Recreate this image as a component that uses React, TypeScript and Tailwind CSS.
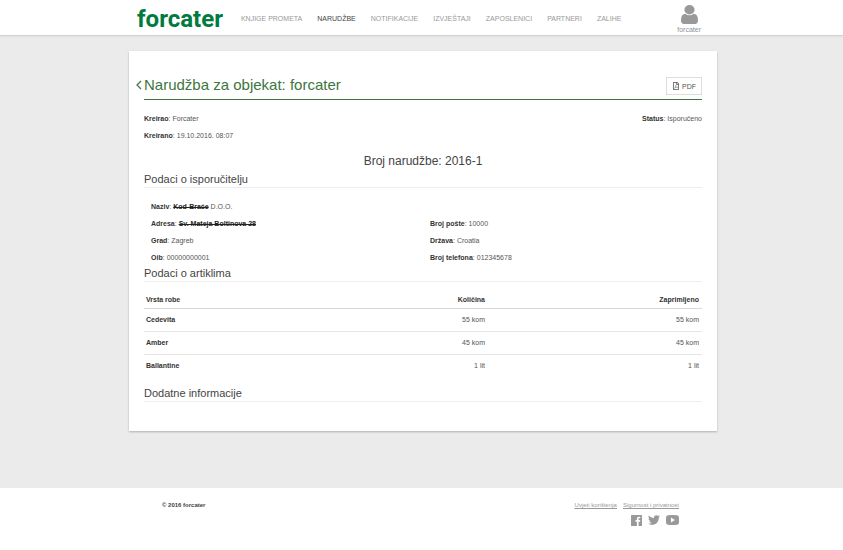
import type { ReactNode } from "react";
import { FaRegFilePdf, FaTwitter } from "react-icons/fa";

const navItems = ["Knjige prometa", "Narudžbe", "Notifikacije", "Izvještaji", "Zaposlenici", "Partneri", "Zalihe"];

const articles = [
  { name: "Cedevita", ordered: "55 kom", received: "55 kom" },
  { name: "Amber", ordered: "45 kom", received: "45 kom" },
  { name: "Ballantine", ordered: "1 lit", received: "1 lit" },
];

export default function App() {
  return (
    <div className="flex min-h-screen flex-col bg-[#ebebeb] font-['Liberation_Sans',Arial,sans-serif] text-[7px] leading-[17px] text-[#555]">
      <Header active="Narudžbe" />
      <main className="pt-[15px] pb-[57px] pl-[3px]">
        <OrderCard />
      </main>
      <Footer />
    </div>
  );
}

function Header({ active }: { active: string }) {
  return (
    <header className="border-b border-[#d2d2d2] bg-white pl-[3px] shadow-xs">
      <div className="mx-auto flex h-[35px] max-w-[588px] items-center pt-[2px] pr-4 pl-2">
        <a href="#" className="font-[Roboto,sans-serif] text-[24px] leading-[32px] font-bold text-[#007a3d]">
          forcater
        </a>
        <nav className="ml-[18px] flex gap-[15px]">
          {navItems.map((item) => (
            <a key={item} href="#" className={`whitespace-nowrap uppercase ${item === active ? "text-[#444]" : "text-[#999]"}`}>
              {item}
            </a>
          ))}
        </nav>
        <a href="#" className="ml-auto flex flex-col items-center gap-[2px] pt-[2px] leading-[8px] text-[#8c949c]">
          <UserIcon />
          forcater
        </a>
      </div>
    </header>
  );
}

function OrderCard() {
  return (
    <article className="mx-auto max-w-[588px] bg-white px-[15px] pt-[26px] pb-[29px] shadow-[0_1px_2px_rgba(0,0,0,0.25)]">
      <div className="flex items-start justify-between border-b border-[#3c763d] pb-1">
        <div className="-ml-2 flex items-center gap-[2px] text-[#3c763d]">
          <a href="#" aria-label="Natrag">
            <svg viewBox="0 0 6 10" className="h-[10px] w-[6px]" fill="none" stroke="currentColor" strokeWidth="1.2">
              <path d="M5 1 1 5l4 4" />
            </svg>
          </a>
          <h1 className="text-[15px] leading-[16px]">Narudžba za objekat: forcater</h1>
        </div>
        <button type="button" className="flex h-[18px] items-center gap-[2px] border border-[#ddd] px-[5px] text-[7px] text-[#555]">
          <FaRegFilePdf size={8} />
          PDF
        </button>
      </div>

      <div className="mt-[10px] flex justify-between">
        <dl>
          <Field label="Kreirao">Forcater</Field>
          <Field label="Kreirano">19.10.2016. 08:07</Field>
        </dl>
        <dl>
          <Field label="Status">Isporučeno</Field>
        </dl>
      </div>

      <h2 className="mt-[7px] mb-[1px] text-center text-[12px] leading-[20px] text-[#444]">Broj narudžbe: 2016-1</h2>

      <SectionTitle>Podaci o isporučitelju</SectionTitle>
      <div className="mt-[10px] grid grid-cols-2">
        <dl className="px-[7px]">
          <Field label="Naziv">
            <Redacted>Kod-Braće</Redacted> D.O.O.
          </Field>
          <Field label="Adresa">
            <Redacted>Sv. Mateja Boltinova 28</Redacted>
          </Field>
          <Field label="Grad">Zagreb</Field>
          <Field label="Oib">00000000001</Field>
        </dl>
        <dl className="px-[7px] pt-[17px]">
          <Field label="Broj pošte">10000</Field>
          <Field label="Država">Croatia</Field>
          <Field label="Broj telefona">012345678</Field>
        </dl>
      </div>

      <SectionTitle>Podaci o artiklima</SectionTitle>
      <table className="mt-[10px] w-full table-fixed border-collapse">
        <thead>
          <tr className="h-4 border-b border-[#d8d8d8] leading-[14px] text-[#333]">
            <th className="w-[31%] px-[2px] py-0 text-left">Vrsta robe</th>
            <th className="px-[3px] py-0 text-right">Količina</th>
            <th className="w-[214px] px-[3px] py-0 text-right">Zaprimljeno</th>
          </tr>
        </thead>
        <tbody>
          {articles.map((article) => (
            <tr key={article.name} className="h-[23px] border-b border-[#e6e6e6] last:border-b-0">
              <th scope="row" className="px-[2px] py-0 text-left text-[#333]">
                {article.name}
              </th>
              <td className="px-[3px] py-0 text-right">{article.ordered}</td>
              <td className="px-[3px] py-0 text-right">{article.received}</td>
            </tr>
          ))}
        </tbody>
      </table>

      <div className="pt-[9px]">
        <SectionTitle>Dodatne informacije</SectionTitle>
      </div>
    </article>
  );
}

function SectionTitle({ children }: { children: ReactNode }) {
  return <h3 className="border-b border-[#eee] text-[11px] leading-[15px] text-[#444]">{children}</h3>;
}

function Field({ label, children }: { label: string; children: ReactNode }) {
  return (
    <div className="flex gap-[2px] whitespace-nowrap">
      <dt>
        <b className="text-[#333]">{label}</b>:
      </dt>
      <dd>{children}</dd>
    </div>
  );
}

function Redacted({ children }: { children: ReactNode }) {
  return <span className="font-bold text-[#222] line-through decoration-[#222] decoration-1">{children}</span>;
}

function UserIcon() {
  return (
    <svg viewBox="256 128 1280 1536" preserveAspectRatio="none" className="h-[19px] w-[17px] fill-[#999]" aria-hidden="true">
      <path d="M1536 1399q0 109-62.5 187t-150.5 78h-854q-88 0-150.5-78t-62.5-187q0-85 8.5-160.5t31.5-152 58.5-131 94-89 134.5-34.5q131 128 313 128t313-128q76 0 134.5 34.5t94 89 58.5 131 31.5 152 8.5 160.5z" />
      <path d="M1280 512q0 159-112.5 271.5t-271.5 112.5-271.5-112.5-112.5-271.5 112.5-271.5 271.5-112.5 271.5 112.5 112.5 271.5z" />
    </svg>
  );
}

function FacebookIcon() {
  return (
    <svg viewBox="0 0 22 22" className="size-[11px] fill-current" aria-hidden="true">
      <path d="M1.2 0h19.6C21.5 0 22 .5 22 1.2v19.6c0 .7-.5 1.2-1.2 1.2h-5.6v-8.5H18l.5-3.4h-3.3V8c0-1 .3-1.6 1.7-1.6h1.7v-3A24 24 0 0 0 16.100 3.300c-2.600 0-4.300 1.500-4.300 4.400v2.400H9v3.400h2.800V22H1.200C.5 22 0 21.500 0 20.800V1.200C0 .5.5 0 1.200 0z" />
    </svg>
  );
}

function YouTubeIcon() {
  return (
    <svg viewBox="0 0 26 20" className="h-[10px] w-[13px] fill-current" aria-hidden="true">
      <path fillRule="evenodd" d="M4 .5Q13-.5 22 .5q3.500.3 3.800 4 .4 5.500 0 11-.3 3.700-3.800 4-9 1-18 0-3.500-.3-3.800-4-.4-5.500 0-11Q.5.8 4 .5zM10 5v10l8-5z" />
    </svg>
  );
}

function Footer() {
  return (
    <footer className="flex-1 bg-white pl-[3px]">
      <div className="mx-auto flex max-w-[588px] justify-between pt-[13px] pr-[38px] pl-[33px] text-[6px] leading-[8px]">
        <p className="font-bold text-[#444]">© 2016 forcater</p>
        <div className="flex flex-col items-end gap-[5px] text-[#999]">
          <div className="flex gap-[6px] underline">
            <a href="#">Uvjeti korištenja</a>
            <a href="#">Sigurnost i privatnost</a>
          </div>
          <div className="flex items-center gap-[6px]">
            <a href="#" aria-label="Facebook">
              <FacebookIcon />
            </a>
            <a href="#" aria-label="Twitter">
              <FaTwitter size={12} />
            </a>
            <a href="#" aria-label="YouTube">
              <YouTubeIcon />
            </a>
          </div>
        </div>
      </div>
    </footer>
  );
}
